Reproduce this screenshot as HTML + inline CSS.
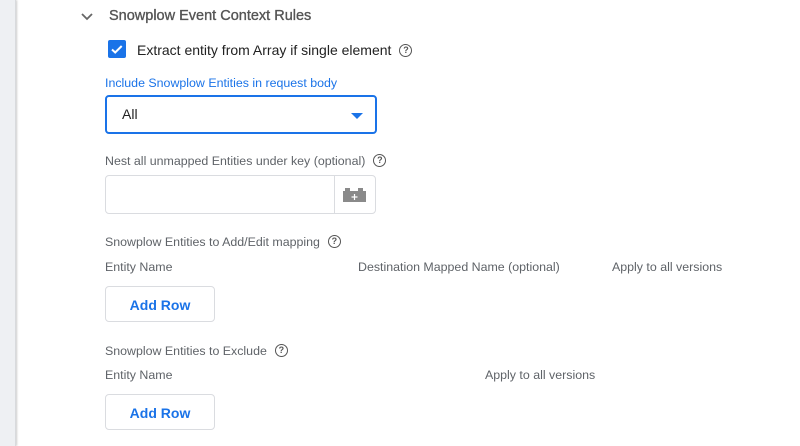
<!DOCTYPE html>
<html><head><meta charset="utf-8"><style>
*{box-sizing:border-box;margin:0;padding:0}
body{width:800px;height:446px;overflow:hidden;background:#fff;font-family:"Liberation Sans",Roboto,sans-serif;position:relative}
.strip{position:absolute;left:0;top:0;width:16px;height:446px;background:#eef0f3;box-shadow:1px 0 2px rgba(0,0,0,.2);border-right:1px solid #d8dadd}
.a{position:absolute;white-space:nowrap}
.lbl{font-size:12.4px;color:#5f6368}
.help{display:inline-block;width:13px;height:13px;border:1.5px solid #555;border-radius:50%;font-size:9px;line-height:10px;text-align:center;color:#555;font-weight:bold;vertical-align:middle;margin-left:8px;position:relative;top:-1px}
.btn{position:absolute;left:105px;width:110px;height:36px;border:1px solid #dadce0;border-radius:4px;color:#1a73e8;font-size:14px;font-weight:bold;text-align:center;line-height:36px}
</style></head><body>
<div class="strip"></div>
<svg class="a" style="left:80px;top:11px" width="14" height="12" viewBox="0 0 14 12"><path d="M2 3l5 5 5-5" stroke="#666" stroke-width="1.8" fill="none"/></svg>
<div class="a" style="left:109px;top:8px;font-size:14.5px;color:#555;-webkit-text-stroke:0.35px #555">Snowplow Event Context Rules</div>
<div class="a" style="left:108px;top:40px;width:18px;height:18px;background:#1a73e8;border-radius:2px"><svg width="18" height="18"><path d="M4 9.5l3.2 3 6.5-6.5" stroke="#fff" stroke-width="2" fill="none"/></svg></div>
<div class="a" style="left:137px;top:42px;font-size:14px;color:#222">Extract entity from Array if single element<span class="help">?</span></div>
<div class="a" style="left:105px;top:76px;font-size:12.4px;color:#1a73e8">Include Snowplow Entities in request body</div>
<div class="a" style="left:105px;top:95px;width:272px;height:39px;border:2px solid #1a73e8;border-radius:4px"></div>
<div class="a" style="left:122px;top:106px;font-size:14px;color:#222">All</div>
<svg class="a" style="left:351px;top:113px" width="12" height="7"><path d="M0 0h12L6 6z" fill="#1a73e8"/></svg>
<div class="a lbl" style="left:105px;top:154px">Nest all unmapped Entities under key (optional)<span class="help">?</span></div>
<div class="a" style="left:105px;top:175px;width:271px;height:39px;border:1px solid #dadce0;border-radius:4px"></div>
<div class="a" style="left:334px;top:176px;width:1px;height:37px;background:#dadce0"></div>
<svg class="a" style="left:343px;top:187px" width="24" height="16"><rect x="0" y="4" width="23" height="11" fill="#8a8a8a"/><rect x="2" y="1" width="5" height="4" fill="#8a8a8a"/><rect x="15" y="1" width="5" height="4" fill="#8a8a8a"/><path d="M11.5 7v6M8.5 10h6" stroke="#fff" stroke-width="1.2"/></svg>
<div class="a lbl" style="left:105px;top:235px">Snowplow Entities to Add/Edit mapping<span class="help">?</span></div>
<div class="a lbl" style="left:105px;top:260px">Entity Name</div>
<div class="a lbl" style="left:358px;top:260px">Destination Mapped Name (optional)</div>
<div class="a lbl" style="left:612px;top:260px">Apply to all versions</div>
<div class="btn" style="top:286px">Add Row</div>
<div class="a lbl" style="left:105px;top:344px">Snowplow Entities to Exclude<span class="help">?</span></div>
<div class="a lbl" style="left:105px;top:368px">Entity Name</div>
<div class="a lbl" style="left:485px;top:368px">Apply to all versions</div>
<div class="btn" style="top:394px">Add Row</div>
</body></html>
